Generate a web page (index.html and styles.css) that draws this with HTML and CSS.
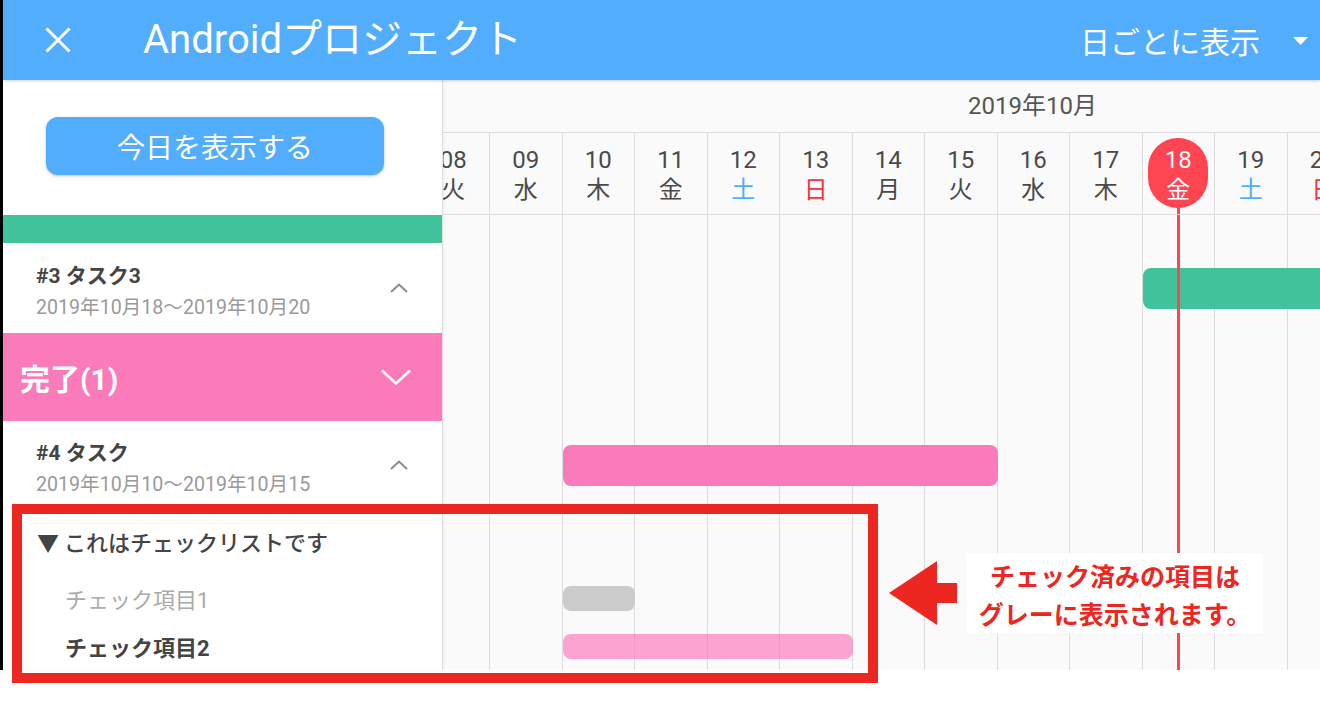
FILE: index.html
```html
<!DOCTYPE html>
<html lang="ja">
<head>
<meta charset="utf-8">
<title>Androidプロジェクト</title>
<link rel="stylesheet" href="styles.css">
</head>
<body>
<div class="screen">
  <header class="appbar">
    <svg class="close" width="26" height="26" viewBox="0 0 26 26"><path d="M1.5 1.5 L24.5 24.5 M24.5 1.5 L1.5 24.5" stroke="#fff" stroke-width="3" fill="none"/></svg>
    <h1 class="title">Androidプロジェクト</h1>
    <div class="mode">日ごとに表示</div>
    <svg class="caret" width="15" height="8" viewBox="0 0 15 8"><polygon points="0,0 15,0 7.5,8" fill="#fff"/></svg>
  </header>
  <div class="main">
    <aside class="side">
      <div class="side-top"><button class="today-btn">今日を表示する</button></div>
      <div class="sec sec-green"></div>
      <div class="task">
        <div class="task-text">
          <div class="task-name">#3 タスク3</div>
          <div class="task-date">2019年10月18～2019年10月20</div>
        </div>
        <svg class="chev-up" width="18" height="10" viewBox="0 0 18 10"><polyline points="1,9 9,1.5 17,9" stroke="#8a8a8a" stroke-width="2" fill="none"/></svg>
      </div>
      <div class="sec sec-pink">
        <span class="sec-label">完了(1)</span>
        <svg class="chev-down" width="30" height="16" viewBox="0 0 30 16"><polyline points="1,1.5 15,14.5 29,1.5" stroke="#fff" stroke-width="2.5" fill="none"/></svg>
      </div>
      <div class="task task-4">
        <div class="task-text">
          <div class="task-name">#4 タスク</div>
          <div class="task-date">2019年10月10～2019年10月15</div>
        </div>
        <svg class="chev-up" width="18" height="10" viewBox="0 0 18 10"><polyline points="1,9 9,1.5 17,9" stroke="#8a8a8a" stroke-width="2" fill="none"/></svg>
      </div>
      <div class="ck-head">▼ これはチェックリストです</div>
      <div class="ck-item done">チェック項目1</div>
      <div class="ck-item">チェック項目2</div>
    </aside>
    <section class="timeline">
      <div class="months">2019年10月</div>
      <div class="chart">
        <div class="days">
          <div class="day"><span class="num">08</span><span class="wd">火</span></div>
          <div class="day"><span class="num">09</span><span class="wd">水</span></div>
          <div class="day"><span class="num">10</span><span class="wd">木</span></div>
          <div class="day"><span class="num">11</span><span class="wd">金</span></div>
          <div class="day sat"><span class="num">12</span><span class="wd">土</span></div>
          <div class="day sun"><span class="num">13</span><span class="wd">日</span></div>
          <div class="day"><span class="num">14</span><span class="wd">月</span></div>
          <div class="day"><span class="num">15</span><span class="wd">火</span></div>
          <div class="day"><span class="num">16</span><span class="wd">水</span></div>
          <div class="day"><span class="num">17</span><span class="wd">木</span></div>
          <div class="day today"><div class="pill"><span class="num">18</span><span class="wd">金</span></div><div class="now-stub"></div></div>
          <div class="day sat"><span class="num">19</span><span class="wd">土</span></div>
          <div class="day sun"><span class="num">20</span><span class="wd">日</span></div>
          <div class="day"><span class="num">21</span><span class="wd">月</span></div>
        </div>
        <div class="plot">
          <div class="cols">
            <div class="col"></div><div class="col"></div><div class="col"></div><div class="col"></div>
            <div class="col"></div><div class="col"></div><div class="col"></div><div class="col"></div>
            <div class="col"></div><div class="col"></div>
            <div class="col now"><div class="now-line"></div></div>
            <div class="col"></div><div class="col"></div><div class="col"></div>
          </div>
          <div class="bars">
            <div class="bar bar-big bar-green" style="grid-column: 11 / span 4; grid-row: 2;"></div>
            <div class="bar bar-big bar-pink" style="grid-column: 3 / span 6; grid-row: 4;"></div>
            <div class="bar bar-small bar-gray" style="grid-column: 3 / span 1; grid-row: 6;"></div>
            <div class="bar bar-small bar-lpink" style="grid-column: 3 / span 4; grid-row: 7;"></div>
          </div>
        </div>
      </div>
    </section>
  </div>
</div>

<div class="mark-box"></div>
<svg class="mark-arrow" width="68" height="64" viewBox="0 0 68 64"><polygon points="0,32 48,0 48,22 68,22 68,42 48,42 48,64" fill="#ec2621"/></svg>
<div class="mark-note">チェック済みの項目は<br>グレーに表示されます。</div>
</body>
</html>
```

FILE: styles.css
```css
* { box-sizing: border-box; }

body {
  margin: 0;
  width: 1320px;
  height: 716px;
  position: relative;
  overflow: hidden;
  background: #fff;
  font-family: Roboto, "Noto Sans CJK JP", sans-serif;
}

.screen {
  width: 1320px;
  height: 670px;
  border-left: 3px solid #000;
  display: flex;
  flex-direction: column;
}

/* app bar */
.appbar {
  height: 80px;
  flex: none;
  background: #52adfd;
  color: #fff;
  display: flex;
  align-items: center;
  padding: 0 12px 0 42px;
  box-shadow: 0 1px 3px rgba(0, 0, 0, 0.18);
  position: relative;
  z-index: 3;
}
.close { flex: none; }
.title {
  margin: 0 0 0 72px;
  font-size: 40px;
  font-weight: 400;
  line-height: 1;
}
.mode {
  margin-left: auto;
  font-size: 30px;
  font-family: "Noto Sans CJK JP", sans-serif;
  line-height: 1;
}
.caret { margin-left: 33px; margin-top: 2px; }

.main {
  flex: 1;
  display: flex;
  min-height: 0;
}

/* side list */
.side {
  width: 440px;
  flex: none;
  background: #fff;
  border-right: 1px solid #e0e0e0;
  display: flex;
  flex-direction: column;
  position: relative;
  z-index: 2;
  box-shadow: 1px 0 2px rgba(0, 0, 0, 0.05);
}
.side-top {
  height: 135px;
  flex: none;
  padding: 37px 0 0 43px;
}
.today-btn {
  width: 338px;
  height: 58px;
  border: none;
  border-radius: 12px;
  background: #52adfd;
  color: #fff;
  font-family: "Noto Sans CJK JP", sans-serif;
  font-size: 28px;
  box-shadow: 0 1px 3px rgba(0, 0, 0, 0.25);
  padding: 0;
}
.sec {
  flex: none;
  display: flex;
  align-items: center;
  justify-content: space-between;
}
.sec-green {
  height: 28px;
  background: #40c39a;
}
.sec-pink {
  height: 88px;
  background: #fb7bba;
  padding: 0 31px 0 17px;
}
.sec-label {
  color: #fff;
  font-size: 30px;
  font-weight: 700;
}
.task {
  height: 90px;
  flex: none;
  display: flex;
  align-items: center;
  justify-content: space-between;
  padding: 8px 34px 0 33px;
}
.task-4 { height: 89px; padding-top: 6px; }
.task-4 .chev-up { margin-top: -6px; }
.task .chev-up { margin-top: -8px; }
.task-name {
  font-size: 21px;
  font-weight: 700;
  color: #444;
  line-height: 32px;
}
.task-date {
  font-size: 19.6px;
  color: #9a9a9a;
  line-height: 32px;
}
.ck-head {
  height: 64px;
  flex: none;
  display: flex;
  align-items: center;
  padding: 0 0 2px 34px;
  font-size: 22px;
  font-weight: 500;
  color: #444;
  font-family: "Noto Sans CJK JP", sans-serif;
}
.ck-item {
  height: 48px;
  flex: none;
  display: flex;
  align-items: center;
  padding-left: 62px;
  font-size: 22px;
  font-weight: 700;
  color: #444;
}
.ck-item.done {
  font-weight: 400;
  color: #aaa;
}

/* timeline */
.timeline {
  flex: 1;
  min-width: 0;
  background: #fafafa;
  overflow: hidden;
  display: flex;
  flex-direction: column;
}
.months {
  height: 53px;
  flex: none;
  border-bottom: 1px solid #dcdcdc;
  padding-left: 525px;
  font-size: 24px;
  line-height: 52px;
  color: #555;
}
.chart {
  flex: 1;
  min-height: 0;
  display: flex;
  flex-direction: column;
  margin-left: -25.5px;
}
.days {
  height: 82px;
  flex: none;
  display: flex;
  border-bottom: 1px solid #dcdcdc;
}
.day {
  width: 72.5px;
  flex: none;
  border-right: 1px solid #dcdcdc;
  display: flex;
  flex-direction: column;
  align-items: center;
  padding-top: 13px;
  font-size: 24px;
  line-height: 28px;
  color: #4a4a4a;
}
.num, .wd { display: block; }
.wd { font-family: "Noto Sans CJK JP", sans-serif; }
.day.sat .wd { color: #52adfd; }
.day.sun .wd { color: #f5323f; }
.day.today { padding-top: 5px; }
.pill {
  width: 60px;
  height: 70px;
  flex: none;
  border-radius: 30px;
  background: #ff4452;
  color: #fff;
  display: flex;
  flex-direction: column;
  align-items: center;
  padding-top: 8px;
}
.now-stub {
  flex: 1;
  width: 3.5px;
  background: #ff4452;
}
.plot {
  flex: 1;
  display: grid;
  grid-template-columns: max-content;
  grid-template-rows: 100%;
}
.cols, .bars { grid-area: 1 / 1; }
.cols { display: flex; }
.col {
  width: 72.5px;
  flex: none;
  border-right: 1px solid #dcdcdc;
}
.col.now {
  display: flex;
  justify-content: center;
}
.now-line {
  width: 3.5px;
  background: #ff4452;
  position: relative;
  z-index: 2;
}
.bars {
  display: grid;
  grid-template-columns: repeat(14, 72.5px);
  grid-template-rows: 28px 90px 88px 89px 64px 48px 48px;
}
.bar {
  align-self: center;
  border-radius: 8px;
  position: relative;
  z-index: 1;
}
.bar-big { height: 41px; }
.bar-small { height: 25px; }
.bar-green { background: #40c39a; }
.bar-pink { background: #fb7bba; }
.bar-gray { background: #cbcbcb; }
.bar-lpink { background: rgba(251, 122, 186, 0.68); }

/* annotation overlay */
.mark-box {
  position: absolute;
  z-index: 10;
  left: 12px;
  top: 504px;
  width: 866px;
  height: 179px;
  border: 10px solid #ec2621;
}
.mark-arrow {
  position: absolute;
  z-index: 10;
  left: 889px;
  top: 561px;
}
.mark-note {
  position: absolute;
  z-index: 10;
  left: 967px;
  top: 553px;
  width: 296px;
  height: 80px;
  background: #fff;
  color: #ec2621;
  font-family: "Noto Sans CJK JP", sans-serif;
  font-weight: 700;
  font-size: 25px;
  line-height: 38px;
  text-align: center;
  padding-top: 3px;
}
```
